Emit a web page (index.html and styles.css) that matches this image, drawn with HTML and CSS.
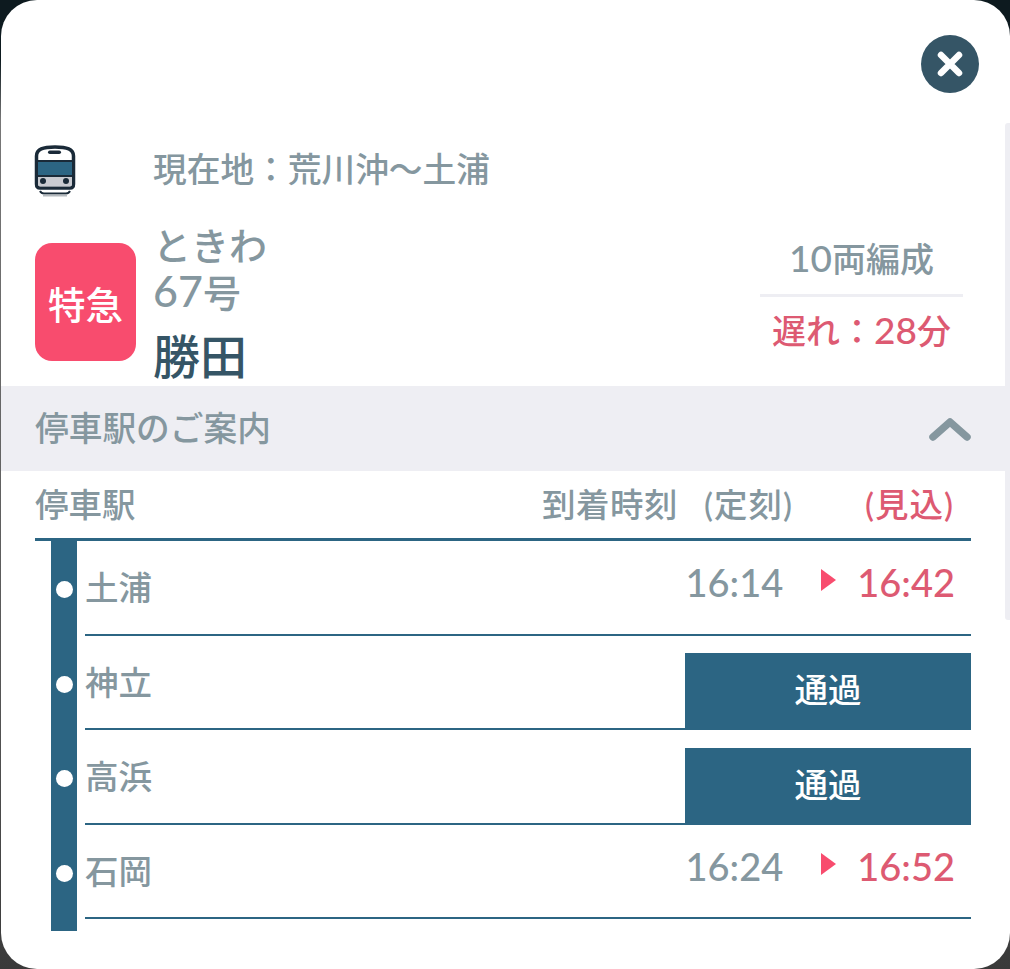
FILE: index.html
```html
<!DOCTYPE html>
<html lang="ja">
<head>
    <meta charset="UTF-8">
    <meta name="viewport" content="width=device-width, initial-scale=1.0">
    <title>列車の詳細</title>
    <link rel="stylesheet" href="styles.css">
</head>
<body>
    <div class="modal">
        <div class="scrollbar"></div>
        <div class="modal-top">
            <button class="close-btn" aria-label="閉じる">
                <svg width="26" height="26" viewBox="0 0 26 26"><path d="M4 4L22 22M22 4L4 22" stroke="#fff" stroke-width="6.5" stroke-linecap="round"/></svg>
            </button>
        </div>
        <div class="location">
            <svg class="train-icon" width="44" height="52" viewBox="0 0 44 52">
                <path d="M3.500 11C3.500 4 10 2 22 2S40.500 4 40.500 11V39C40.500 41.500 39.500 43 37 43H7C4.500 43 3.500 41.500 3.500 39Z" fill="#fff" stroke="#1a2a38" stroke-width="3.500"/>
                <rect x="5" y="16.500" width="34" height="13.500" fill="#2c6583"/>
                <path d="M5 30H39V39C39 40.500 38.500 41.500 37 41.500H7C5.500 41.500 5 40.500 5 39Z" fill="#c9cbd1"/>
                <path d="M4 16H40M4 31H40" stroke="#1a2a38" stroke-width="2"/>
                <rect x="15" y="5.500" width="13" height="3.500" rx="1.750" fill="#1a2a38"/>
                <circle cx="10" cy="36" r="3" fill="#1a2a38"/>
                <circle cx="33" cy="36" r="3" fill="#1a2a38"/>
                <path d="M7 46C8 48 9 48.500 11 48.500H33C35 48.500 36 48 37 46" fill="none" stroke="#1a2a38" stroke-width="2"/>
                <path d="M10 50.500H34" stroke="#b4b9be" stroke-width="2"/>
            </svg>
            <span class="location-text">現在地：荒川沖〜土浦</span>
        </div>
        <div class="train">
            <div class="train-type">特急</div>
            <div class="train-name">
                <div class="name-line">ときわ</div>
                <div class="name-line"><span class="num-lg">67</span>号</div>
                <div class="train-dest">勝田</div>
            </div>
            <div class="train-info">
                <div class="train-cars"><span class="num">10</span>両編成</div>
                <div class="train-delay">遅れ：<span class="num">28</span>分</div>
            </div>
        </div>
        <div class="section-bar">
            <span class="section-title">停車駅のご案内</span>
            <svg width="42" height="26" viewBox="0 0 42 26"><path d="M4 21L21 6L38 21" fill="none" stroke="#85979f" stroke-width="7.500" stroke-linecap="round" stroke-linejoin="round"/></svg>
        </div>
        <div class="table-head">
            <span class="head-station">停車駅</span>
            <span class="head-time">到着時刻</span>
            <span class="head-plan">(定刻)</span>
            <span class="head-real">(見込)</span>
        </div>
        <div class="stops">
            <div class="rail">
                <div class="rail-cell"><i class="dot"></i></div>
                <div class="rail-cell"><i class="dot"></i></div>
                <div class="rail-cell"><i class="dot"></i></div>
                <div class="rail-cell"><i class="dot"></i></div>
            </div>
            <div class="stop-list">
                <div class="stop">
                    <span class="stop-name">土浦</span>
                    <div class="stop-times">
                        <span class="time-plan">16:14</span>
                        <i class="arrow"></i>
                        <span class="time-real">16:42</span>
                    </div>
                </div>
                <div class="stop">
                    <span class="stop-name">神立</span>
                    <div class="stop-pass">通過</div>
                </div>
                <div class="stop">
                    <span class="stop-name">高浜</span>
                    <div class="stop-pass">通過</div>
                </div>
                <div class="stop">
                    <span class="stop-name">石岡</span>
                    <div class="stop-times">
                        <span class="time-plan">16:24</span>
                        <i class="arrow"></i>
                        <span class="time-real">16:52</span>
                    </div>
                </div>
            </div>
        </div>
    </div>
</body>
</html>
```
FILE: styles.css
```css
html, body {
    margin: 0;
    padding: 0;
    height: 969px;
    overflow: hidden;
}
body {
    background: linear-gradient(#0d1a1f 0, #0d1a1f 60px, #777 120px, #555 700px, #3a3a3a 969px);
    padding-left: 1px;
    box-sizing: border-box;
    font-family: Lato, "Noto Sans CJK JP", sans-serif;
    font-weight: 500;
    color: #85979f;
}
.modal {
    position: relative;
    height: 969px;
    background: #fff;
    border-radius: 36px;
    overflow: hidden;
}
.scrollbar {
    position: absolute;
    top: 123px;
    right: 0;
    width: 5px;
    height: 497px;
    background: #eeeef3;
    border-radius: 3px 0 0 3px;
}
.modal-top {
    height: 145px;
    display: flex;
    justify-content: flex-end;
    align-items: flex-start;
    padding: 35px 31px 0 0;
    box-sizing: border-box;
}
.close-btn {
    width: 58px;
    height: 58px;
    border: none;
    border-radius: 50%;
    background: #355566;
    padding: 0;
    display: flex;
    align-items: center;
    justify-content: center;
}
.location {
    display: flex;
    align-items: center;
    height: 52px;
    padding-left: 32px;
}
.train-icon {
    display: block;
    flex: none;
}
.location-text {
    margin-left: 76px;
    font-size: 33.700px;
    line-height: 48px;
    padding-bottom: 4px;
}
.train {
    display: flex;
    height: 189px;
    padding: 25px 47px 0 34px;
    box-sizing: border-box;
}
.train-type {
    width: 101px;
    height: 118px;
    margin-top: 21px;
    background: #f84c6e;
    border-radius: 17px;
    color: #fff;
    font-size: 37.500px;
    display: flex;
    align-items: center;
    justify-content: center;
}
.train-name {
    margin-left: 17px;
    flex: 1;
}
.name-line {
    font-size: 38px;
    line-height: 46px;
}
.num-lg {
    font-size: 43px;
}
.num {
    font-size: 37px;
}
.train-dest {
    font-size: 47px;
    line-height: 82px;
    color: #355566;
}
.train-info {
    width: 203px;
    text-align: center;
    margin-top: 9px;
}
.train-cars {
    font-size: 34px;
    line-height: 54px;
    padding-bottom: 8px;
    border-bottom: 3px solid #eeeef3;
}
.train-delay {
    font-size: 34px;
    line-height: 54px;
    margin-top: 6px;
    color: #dd5a72;
}
.section-bar {
    height: 85px;
    margin-right: 5px;
    background: #eeeef3;
    padding: 0 34px 0 34px;
    display: flex;
    align-items: center;
    justify-content: space-between;
    font-size: 33.700px;
}
.section-title {
    padding-bottom: 4px;
}
.table-head {
    display: flex;
    align-items: center;
    height: 63px;
    padding-bottom: 4px;
    margin: 0 39px 0 34px;
    border-bottom: 3px solid #2c6583;
    font-size: 33.500px;
}
.head-station {
    flex: 1;
}
.head-time {
    letter-spacing: 0.5px;
}
.head-plan {
    margin-left: 26px;
    letter-spacing: 1px;
}
.head-real {
    margin-left: 72px;
    margin-right: 17px;
    letter-spacing: 1px;
    color: #dd5a72;
}
.stops {
    display: flex;
    margin: 0 39px 0 50px;
    gap: 8px;
}
.rail {
    width: 26px;
    flex: none;
    background: #2c6583;
    padding-bottom: 12px;
}
.rail-cell {
    height: 94.500px;
    padding-top: 3px;
    box-sizing: border-box;
    display: flex;
    align-items: center;
    justify-content: center;
}
.dot {
    width: 17px;
    height: 17px;
    border-radius: 50%;
    background: #fff;
}
.stop-list {
    flex: 1;
}
.stop {
    height: 94.500px;
    box-sizing: border-box;
    border-bottom: 2px solid #2c6583;
    display: flex;
    justify-content: space-between;
}
.stop-name {
    font-size: 33.500px;
    line-height: 92px;
}
.stop-times {
    display: flex;
    align-items: center;
    height: 82px;
    margin-right: 16px;
    font-size: 38px;
}
.arrow {
    width: 0;
    height: 0;
    margin: 0 21px 4px 38px;
    border-left: 15px solid #f84c6e;
    border-top: 11px solid transparent;
    border-bottom: 11px solid transparent;
}
.time-real {
    color: #dd5a72;
}
.stop-pass {
    width: 286px;
    height: 77px;
    margin-bottom: -2px;
    padding-bottom: 8px;
    box-sizing: border-box;
    align-self: flex-end;
    background: #2c6583;
    color: #fff;
    font-size: 33.500px;
    display: flex;
    align-items: center;
    justify-content: center;
}
```
